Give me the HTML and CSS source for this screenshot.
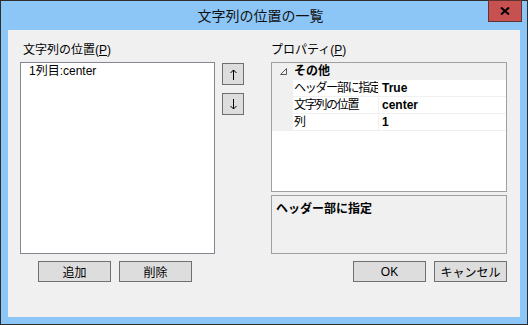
FILE: index.html
```html
<!DOCTYPE html>
<html lang="ja">
<head>
    <meta charset="UTF-8">
    <title>文字列の位置の一覧</title>
    <link rel="stylesheet" href="styles.css">
</head>
<body>
    <div class="window">
        <div class="titlebar">
            <span class="title">文字列の位置の一覧</span>
            <div class="close">
                <svg width="10" height="8" viewBox="0 0 10 8">
                    <path d="M1 0.5 L9 7.5 M9 0.5 L1 7.5" stroke="#000" stroke-width="2"/>
                </svg>
            </div>
        </div>
        <div class="client">
            <div class="main">
                <div class="pane-left">
                    <div class="label">文字列の位置(<u>P</u>)</div>
                    <div class="list-row">
                        <div class="listbox">
                            <div class="list-item">1列目:center</div>
                        </div>
                        <div class="move-buttons">
                            <div class="btn btn-small">
                                <svg width="7" height="11" viewBox="0 0 7 11">
                                    <path d="M3.5 1 V11 M0.5 4 L3.5 1 L6.5 4" stroke="#000" fill="none"/>
                                </svg>
                            </div>
                            <div class="btn btn-small">
                                <svg width="7" height="11" viewBox="0 0 7 11">
                                    <path d="M3.5 0 V10 M0.5 7 L3.5 10 L6.5 7" stroke="#000" fill="none"/>
                                </svg>
                            </div>
                        </div>
                    </div>
                </div>
                <div class="pane-right">
                    <div class="label">プロパティ(<u>P</u>)</div>
                    <div class="propgrid">
                        <div class="category">
                            <span class="expander">
                                <svg width="7" height="7" viewBox="0 0 7 7">
                                    <path d="M6.5 0.5 V6.5 H0.5 Z" stroke="#595959" fill="none"/>
                                </svg>
                            </span>
                            <span class="cat-name">その他</span>
                        </div>
                        <div class="prop">
                            <span class="gutter"></span>
                            <span class="name">ヘッダー部に指定</span>
                            <span class="value">True</span>
                        </div>
                        <div class="prop">
                            <span class="gutter"></span>
                            <span class="name">文字列の位置</span>
                            <span class="value">center</span>
                        </div>
                        <div class="prop">
                            <span class="gutter"></span>
                            <span class="name">列</span>
                            <span class="value">1</span>
                        </div>
                    </div>
                    <div class="desc">ヘッダー部に指定</div>
                </div>
            </div>
            <div class="footer">
                <div class="group group-left">
                    <div class="btn">追加</div>
                    <div class="btn">削除</div>
                </div>
                <div class="group">
                    <div class="btn">OK</div>
                    <div class="btn">キャンセル</div>
                </div>
            </div>
        </div>
    </div>
</body>
</html>
```

FILE: styles.css
```css
body {
    margin: 0;
    font-family: 'Liberation Sans', 'Noto Sans CJK JP', sans-serif;
    font-size: 12px;
    color: #000;
}
.window {
    width: 528px;
    height: 325px;
    box-sizing: border-box;
    border: 1px solid #2e2e2e;
    background-color: #8cc6f7;
    display: flex;
    flex-direction: column;
}
.titlebar {
    position: relative;
    height: 29px;
    line-height: 29px;
    text-align: center;
    padding-right: 7px;
}
.title {
    font-family: 'Noto Sans CJK JP', sans-serif;
    font-size: 14px;
    color: #111;
}
.close {
    position: absolute;
    top: -1px;
    right: 5px;
    width: 32px;
    height: 20px;
    background-color: #c75050;
    border: 1px solid #5e3434;
    display: flex;
    align-items: center;
    justify-content: center;
}
.client {
    flex: 1;
    margin: 0 7px 7px 7px;
    background-color: #f0f0f0;
    padding: 13px 13px 0 12px;
}
.main {
    display: flex;
    justify-content: space-between;
}
.label {
    height: 14px;
    line-height: 14px;
    margin-bottom: 5px;
    padding-left: 3px;
}
.pane-left {
    width: 224px;
}
.list-row {
    display: flex;
    gap: 7px;
}
.listbox {
    width: 195px;
    height: 192px;
    box-sizing: border-box;
    border: 1px solid #828790;
    background-color: #fff;
    padding: 1px 0 0 8px;
}
.list-item {
    line-height: 14px;
}
.move-buttons {
    display: flex;
    flex-direction: column;
    gap: 8px;
    margin-top: 1px;
}
.btn {
    width: 73px;
    height: 21px;
    box-sizing: border-box;
    border: 1px solid #707070;
    background-color: #dddddd;
    display: flex;
    align-items: center;
    justify-content: center;
}
.btn-small {
    width: 22px;
    height: 22px;
}
.pane-right {
    width: 236px;
}
.pane-right .label {
    padding-left: 0;
}
.propgrid {
    height: 130px;
    box-sizing: border-box;
    border: 1px solid #a0a0a0;
    background-color: #fff;
}
.category {
    height: 16px;
    line-height: 16px;
    background-color: #f0f0f0;
    display: flex;
    align-items: center;
    border-bottom: 1px solid #f0f0f0;
}
.expander {
    width: 21px;
    display: flex;
    justify-content: center;
    padding-left: 1px;
}
.cat-name {
    font-weight: bold;
}
.prop {
    display: grid;
    grid-template-columns: 21px 86px 1fr;
    height: 16px;
    line-height: 16px;
    border-bottom: 1px solid #f0f0f0;
}
.gutter {
    background-color: #f0f0f0;
}
.name {
    padding-left: 1px;
    border-right: 1px solid #f0f0f0;
    white-space: nowrap;
    overflow: hidden;
    letter-spacing: -1.3px;
}
.value {
    padding-left: 3px;
    font-weight: bold;
}
.desc {
    margin-top: 3px;
    height: 59px;
    box-sizing: border-box;
    border: 1px solid #a0a0a0;
    padding: 3px 4px;
    font-weight: bold;
}
.footer {
    margin-top: 7px;
    display: flex;
    justify-content: space-between;
}
.group {
    display: flex;
    gap: 8px;
}
.group-left {
    margin-left: 18px;
}
```
